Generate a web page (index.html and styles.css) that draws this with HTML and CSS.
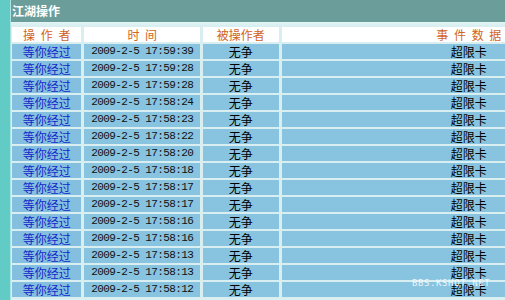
FILE: index.html
```html
<!DOCTYPE html>
<html lang="zh">
<head>
<meta charset="utf-8">
<title>江湖操作</title>
<link rel="stylesheet" href="styles.css">
</head>
<body>
<div class="page">
  <div class="side"></div>
  <div class="main">
    <div class="titlebar">江湖操作</div>
    <div class="clip">
    <table class="log">
      <thead>
        <tr>
          <th class="c1">操 作 者</th>
          <th class="c2">时 间</th>
          <th class="c3">被操作者</th>
          <th class="c4">事 件 数 据</th>
        </tr>
      </thead>
      <tbody>
        <tr><td class="c1 who">等你经过</td><td class="c2 time">2009-2-5 17:59:39</td><td class="c3">无争</td><td class="c4">超限卡</td></tr>
        <tr><td class="c1 who">等你经过</td><td class="c2 time">2009-2-5 17:59:28</td><td class="c3">无争</td><td class="c4">超限卡</td></tr>
        <tr><td class="c1 who">等你经过</td><td class="c2 time">2009-2-5 17:59:28</td><td class="c3">无争</td><td class="c4">超限卡</td></tr>
        <tr><td class="c1 who">等你经过</td><td class="c2 time">2009-2-5 17:58:24</td><td class="c3">无争</td><td class="c4">超限卡</td></tr>
        <tr><td class="c1 who">等你经过</td><td class="c2 time">2009-2-5 17:58:23</td><td class="c3">无争</td><td class="c4">超限卡</td></tr>
        <tr><td class="c1 who">等你经过</td><td class="c2 time">2009-2-5 17:58:22</td><td class="c3">无争</td><td class="c4">超限卡</td></tr>
        <tr><td class="c1 who">等你经过</td><td class="c2 time">2009-2-5 17:58:20</td><td class="c3">无争</td><td class="c4">超限卡</td></tr>
        <tr><td class="c1 who">等你经过</td><td class="c2 time">2009-2-5 17:58:18</td><td class="c3">无争</td><td class="c4">超限卡</td></tr>
        <tr><td class="c1 who">等你经过</td><td class="c2 time">2009-2-5 17:58:17</td><td class="c3">无争</td><td class="c4">超限卡</td></tr>
        <tr><td class="c1 who">等你经过</td><td class="c2 time">2009-2-5 17:58:17</td><td class="c3">无争</td><td class="c4">超限卡</td></tr>
        <tr><td class="c1 who">等你经过</td><td class="c2 time">2009-2-5 17:58:16</td><td class="c3">无争</td><td class="c4">超限卡</td></tr>
        <tr><td class="c1 who">等你经过</td><td class="c2 time">2009-2-5 17:58:16</td><td class="c3">无争</td><td class="c4">超限卡</td></tr>
        <tr><td class="c1 who">等你经过</td><td class="c2 time">2009-2-5 17:58:13</td><td class="c3">无争</td><td class="c4">超限卡</td></tr>
        <tr><td class="c1 who">等你经过</td><td class="c2 time">2009-2-5 17:58:13</td><td class="c3">无争</td><td class="c4">超限卡</td></tr>
        <tr><td class="c1 who">等你经过</td><td class="c2 time">2009-2-5 17:58:12</td><td class="c3">无争</td><td class="c4">超限卡</td></tr>
      </tbody>
    </table>
    </div>
  </div>
</div>
<div class="watermark">BBS.KSHOT.NET</div>
</body>
</html>
```

FILE: styles.css
```css
html, body {
  margin: 0;
  padding: 0;
  overflow: hidden;
  width: 505px;
  height: 300px;
}
body {
  font-family: "Noto Sans CJK SC", "Liberation Sans", sans-serif;
  font-size: 12px;
  background: #dcf1f1;
  position: relative;
}
.page {
  display: flex;
  width: 505px;
  height: 300px;
  overflow: hidden;
}
.side {
  width: 10px;
  flex: 0 0 10px;
  background: #62cbc5;
  border-right: 1px solid #a9e4e0;
}
.main {
  flex: 1 1 auto;
  min-width: 0;
  overflow: hidden;
  background: #dcf1f1;
}
.titlebar {
  height: 23px;
  line-height: 22px;
  background: #6b9e9a;
  color: #ffffff;
  font-weight: bold;
  font-size: 12px;
  padding-left: 1px;
  border-bottom: 1px solid #e4f4f4;
  box-sizing: border-box;
}
.clip {
  overflow: hidden;
  margin-left: -2px;
  margin-top: 2px;
}
.log {
  border-collapse: separate;
  border-spacing: 3px 2px;
  table-layout: fixed;
  width: 650px;
  background: #d8eef0;
}
.log th, .log td {
  padding: 0;
  height: 15px;
  line-height: 15px;
  font-size: 12px;
  white-space: nowrap;
  overflow: hidden;
}
.log th {
  background: #ffffff;
  color: #d2641c;
  font-weight: normal;
  text-align: center;
  word-spacing: 3px;
}
.log td {
  background: #88c3df;
  color: #000000;
  text-align: center;
}
.c1 { width: 69px; }
.c2 { width: 115px; }
.c3 { width: 75px; }
.c4 { width: 372px; }
.log td.who {
  color: #1428c8;
  background: #84bfe0;
}
.log td.time {
  font-family: "Liberation Mono", monospace;
  font-size: 11px;
  letter-spacing: -0.6px;
  color: #111111;
}
.watermark {
  position: absolute;
  left: 412px;
  top: 278px;
  font-family: "DejaVu Sans Mono", monospace;
  font-size: 9px;
  letter-spacing: 0.6px;
  color: rgba(255, 255, 255, 0.85);
}
```
